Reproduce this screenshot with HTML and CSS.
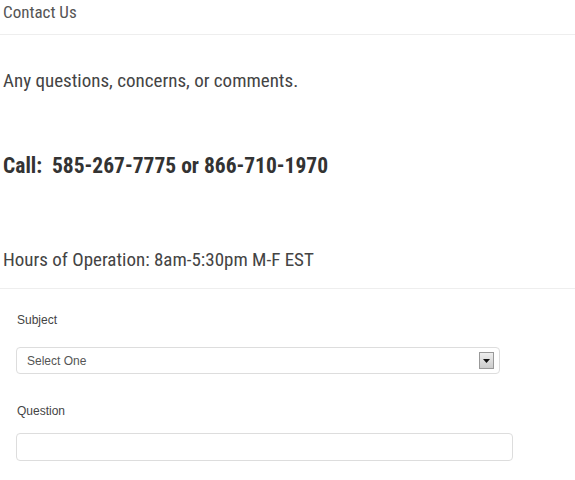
FILE: index.html
```html
<!DOCTYPE html>
<html>
<head>
<meta charset="utf-8">
<link rel="stylesheet" href="styles.css">
</head>
<body>
<div class="page">
  <h1 class="title">Contact Us</h1>
  <p class="lead">Any questions, concerns, or comments.</p>
  <p class="call">Call:&nbsp; 585-267-7775 or 866-710-1970</p>
  <p class="hours">Hours of Operation: 8am-5:30pm M-F EST</p>
  <form class="form">
    <label class="label">Subject</label>
    <div class="select">
      <span class="select-text">Select One</span>
      <span class="select-btn"><svg width="7" height="4" viewBox="0 0 7 4"><path d="M0 0h7L3.5 4z" fill="#111"/></svg></span>
    </div>
    <label class="label">Question</label>
    <div class="input"></div>
  </form>
</div>
</body>
</html>
```
FILE: styles.css
```css
html,body{margin:0;padding:0;background:#fff;}
.page{padding:0 0 0 3px;font-family:"Roboto Condensed","Liberation Sans",sans-serif;color:#555;}
.title{margin:0;font-size:17px;font-weight:400;line-height:22px;padding-top:1px;padding-bottom:11px;border-bottom:1px solid #eee;margin-left:-3px;padding-left:3px;}
.lead{margin:0;padding-top:34px;font-size:19px;line-height:24px;color:#444;}
.call{margin:0;padding-top:61px;font-size:21.5px;font-weight:700;line-height:24px;color:#333;}
.hours{margin:0;padding-top:70px;font-size:19px;line-height:24px;color:#444;padding-bottom:16px;border-bottom:1px solid #eee;margin-left:-3px;padding-left:3px;}
.form{display:flex;flex-direction:column;align-items:flex-start;padding:24px 0 0 13px;font-family:"Liberation Sans",Arial,sans-serif;}
.label{font-size:12px;color:#444;line-height:14px;margin-left:1px;}
.select{box-sizing:border-box;width:484px;height:27px;margin-top:20px;margin-bottom:30px;border:1px solid #ddd;border-radius:4px;display:flex;align-items:center;justify-content:space-between;padding:0 5px 0 10px;}
.select-text{font-size:12px;color:#555;}
.select-btn{box-sizing:border-box;width:15px;height:17px;border:1px solid #999;background:linear-gradient(#eee,#ccc);display:flex;align-items:center;justify-content:center;}
.input{box-sizing:border-box;width:497px;height:28px;margin-top:15px;border:1px solid #ddd;border-radius:4px;}
```
